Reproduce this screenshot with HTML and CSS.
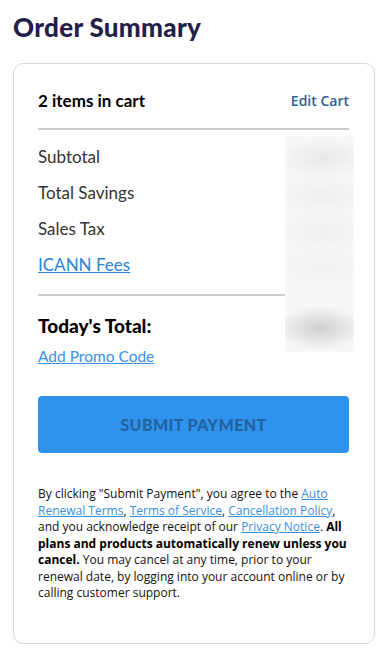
FILE: index.html
```html
<!DOCTYPE html>
<html lang="en">

<head>
    <meta charset="UTF-8">
    <meta name="viewport" content="width=device-width, initial-scale=1.0">
    <title>Order Summary</title>
    <link rel="stylesheet" href="styles.css">
</head>

<body>
    <h1 class="pageTitle">Order Summary</h1>

    <div class="summaryCard">
        <div class="cartHeader">
            <span class="cartCount">2 items in cart</span>
            <a href="#" class="editCart">Edit Cart</a>
        </div>

        <div class="divider"></div>

        <div class="lineItem">Subtotal</div>
        <div class="lineItem">Total Savings</div>
        <div class="lineItem">Sales Tax</div>
        <div class="lineItem"><a href="#" class="feeLink">ICANN Fees</a></div>

        <div class="divider short"></div>

        <div class="totalLabel">Today's Total:</div>
        <a href="#" class="promoLink">Add Promo Code</a>

        <button class="submitBtn">SUBMIT PAYMENT</button>

        <p class="legal">
            By clicking "Submit Payment", you agree to the <a href="#">Auto Renewal Terms</a>, <a href="#">Terms of Service</a>, <a href="#">Cancellation Policy</a>, and you acknowledge receipt of our <a href="#">Privacy Notice</a>. <b>All plans and products automatically renew unless you cancel.</b> You may cancel at any time, prior to your renewal date, by logging into your account online or by calling customer support.
        </p>

        <!-- prices are hidden behind a blur -->
        <div class="priceBlur"></div>
    </div>
</body>

</html>
```

FILE: styles.css
```css
body, html {
    margin: 0;
    background: #ffffff;
}

body {
    padding: 0 13px;
    font-family: "Lato", "Open Sans", sans-serif;
    color: #222;
}

.pageTitle {
    margin: 0;
    padding-top: 11px;
    height: 52px;
    box-sizing: border-box;
    font-size: 26px;
    line-height: 32px;
    font-weight: 900;
    color: #1f2147;
    letter-spacing: 0.3px;
}

.summaryCard {
    position: relative; /* holds the blur overlay */
    border: 1px solid #d6d7e2;
    border-radius: 10px;
    padding: 24px 25px 41px 24px;
    margin-top: 11px;
    width: 362px;
    box-sizing: border-box;
}

.cartHeader {
    display: flex;
    justify-content: space-between;
    align-items: center;
    height: 24px;
    margin-bottom: 16px;
}

.cartCount {
    font-size: 17px;
    font-weight: 700;
    color: #000;
}

.editCart {
    font-family: "Open Sans", sans-serif;
    font-size: 14px;
    font-weight: 600;
    color: #2d5e94;
    text-decoration: none;
}

.divider {
    height: 2px;
    background: #cccccc;
    margin-bottom: 9px;
}

.divider.short {
    margin-top: 11px;
    margin-bottom: 18px;
}

.lineItem {
    height: 36px;
    line-height: 36px;
    font-size: 17px;
    color: #333;
}

.feeLink {
    color: #2f82d4;
}

.totalLabel {
    font-size: 19px;
    line-height: 24px;
    font-weight: 900;
    color: #000;
}

.promoLink {
    display: block;
    margin-top: 8px;
    line-height: 20px;
    font-size: 15.5px;
    color: #3a90e6;
}

.submitBtn {
    display: block;
    width: 100%;
    height: 57px;
    margin-top: 30px;
    border: none;
    border-radius: 4px;
    background-color: #2f93ee;
    color: #24629f;
    font-family: "Lato", sans-serif;
    font-size: 16px;
    font-weight: 900;
    letter-spacing: 0.4px;
    cursor: pointer;
}

.legal {
    margin: 33px 0 0 0;
    font-family: "Open Sans", sans-serif;
    font-size: 12px;
    line-height: 16.5px;
    color: #111;
}

.legal a {
    color: #3a8ee0;
}

.legal b {
    font-weight: 700;
    color: #000;
}

.priceBlur {
    position: absolute;
    left: 271px;
    top: 72px;
    width: 69px;
    height: 216px;
    background:
        radial-gradient(ellipse 45px 22px at 50% 192px, rgba(200, 200, 200, 0.85), rgba(200, 200, 200, 0) 100%),
        radial-gradient(ellipse 45px 20px at 55% 22px, rgba(225, 225, 225, 0.7), rgba(225, 225, 225, 0) 100%),
        radial-gradient(ellipse 45px 20px at 55% 60px, rgba(230, 230, 230, 0.5), rgba(230, 230, 230, 0) 100%),
        radial-gradient(ellipse 45px 20px at 55% 96px, rgba(232, 232, 232, 0.5), rgba(232, 232, 232, 0) 100%),
        radial-gradient(ellipse 45px 20px at 55% 130px, rgba(235, 235, 235, 0.4), rgba(235, 235, 235, 0) 100%),
        #f7f7f7;
}
```
